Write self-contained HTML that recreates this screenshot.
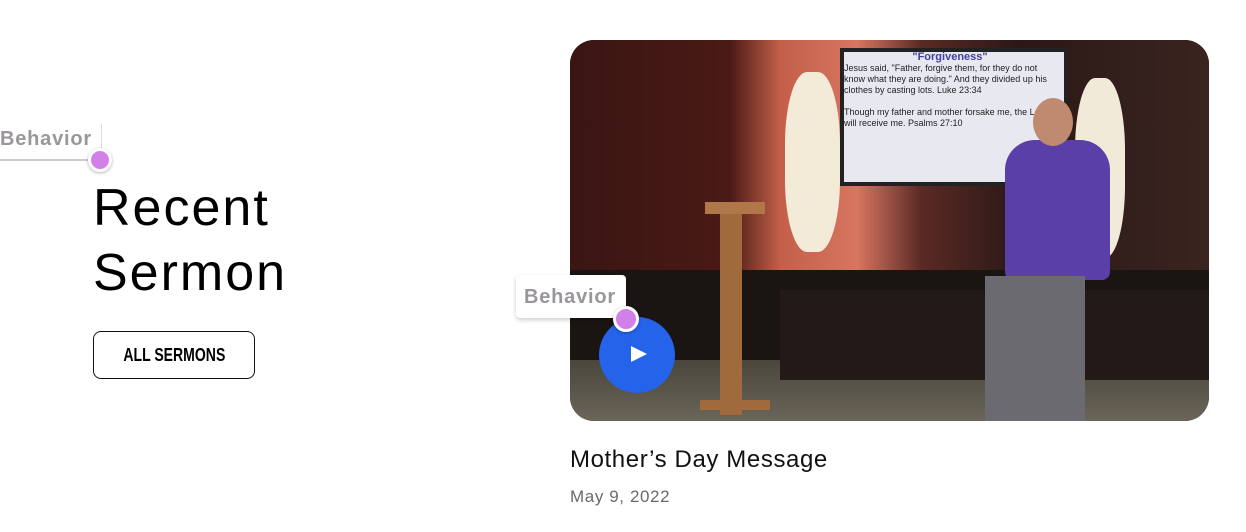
<!DOCTYPE html>
<html><head><style>
body{margin:0;width:1246px;height:532px;background:#fff;position:relative;overflow:hidden;font-family:"Liberation Sans",sans-serif}
.abs{position:absolute}
h1{position:absolute;left:93px;top:176px;margin:0;font:400 52px/65px "Liberation Sans",sans-serif;color:#000;letter-spacing:2px}
.btn{left:93px;top:331px;width:162px;height:48px;border:1px solid #111;border-radius:8px;box-sizing:border-box;text-align:center;font:700 18px/46px "Liberation Sans",sans-serif}
.btn span{display:inline-block;transform:scaleX(0.78)}
.tag{color:#9a969c;font-size:20px;font-weight:700;letter-spacing:0.8px}
.dot{width:20px;height:20px;border-radius:50%;background:#d080e8;border:3px solid #fff;box-shadow:0 1px 3px rgba(0,0,0,.3)}
</style></head><body>
<div class="abs" style="left:0;top:124px;width:101px;height:35px;border-right:1px solid #ddd;border-bottom:2px solid #ccc"></div>
<div class="abs tag" style="left:0;top:128px">Behavior</div>
<div class="abs dot" style="left:88px;top:148px;width:18px;height:18px"></div>
<h1>Recent<br>Sermon</h1>
<div class="abs btn"><span>ALL SERMONS</span></div>

<div class="abs" style="left:570px;top:40px;width:639px;height:381px;border-radius:24px;overflow:hidden;background:#241614">
 <div class="abs" style="left:0;top:0;width:639px;height:270px;background:linear-gradient(90deg,#3a1512 0%,#4a1a16 25%,#c4604a 33%,#d77560 45%,#5a2a24 55%,#2a1816 70%,#3a2420 100%)"></div>
 <div class="abs" style="left:0;top:230px;width:639px;height:100px;background:#1a1412"></div>
 <div class="abs" style="left:0;top:320px;width:639px;height:61px;background:linear-gradient(#4a463c,#6a6558)"></div>
 <div class="abs" style="left:210px;top:250px;width:429px;height:90px;background:#231a18"></div>
 <div class="abs" style="left:270px;top:8px;width:220px;height:130px;background:#e8e8f0;border:4px solid #222"></div>
 <div class="abs" style="left:274px;top:12px;width:212px;font-size:9px;line-height:11px;color:#222;text-align:left"><div style="text-align:center;color:#4040a0;font-weight:700;font-size:11px">"Forgiveness"</div>Jesus said, "Father, forgive them, for they do not know what they are doing." And they divided up his clothes by casting lots. Luke 23:34<br><br>Though my father and mother forsake me, the Lord will receive me. Psalms 27:10</div>
 <div class="abs" style="left:215px;top:32px;width:55px;height:180px;border-radius:40%;background:#f4ead8"></div>
 <div class="abs" style="left:505px;top:38px;width:50px;height:180px;border-radius:40%;background:#f2ead8"></div>
 <div class="abs" style="left:150px;top:165px;width:22px;height:210px;background:#a06a3c"></div>
 <div class="abs" style="left:135px;top:162px;width:60px;height:12px;background:#b07848"></div>
 <div class="abs" style="left:130px;top:360px;width:70px;height:10px;background:#a06a3c"></div>
 <div class="abs" style="left:435px;top:100px;width:105px;height:140px;border-radius:30px 30px 8px 8px;background:#5a3fa8"></div>
 <div class="abs" style="left:463px;top:58px;width:40px;height:48px;border-radius:50%;background:#c08a70"></div>
 <div class="abs" style="left:415px;top:236px;width:100px;height:145px;background:#6a6a70"></div>
</div>
<div class="abs" style="left:599px;top:317px;width:76px;height:76px;border-radius:50%;background:#2563eb"></div>
<svg class="abs" style="left:630px;top:345px" width="18" height="18"><path d="M1 1L17 9L1 17Z" fill="#fff"/></svg>
<div class="abs" style="left:516px;top:275px;width:110px;height:43px;background:#fff;border-radius:4px;box-shadow:0 2px 4px rgba(0,0,0,.2)"></div>
<div class="abs tag" style="left:524px;top:286px">Behavior</div>
<div class="abs dot" style="left:613px;top:306px;width:20px;height:20px"></div>

<div class="abs" style="left:570px;top:446px;font-size:24px;color:#111;letter-spacing:0.6px">Mother’s Day Message</div>
<div class="abs" style="left:570px;top:487px;font-size:17px;color:#6a6a6a;letter-spacing:0.6px">May 9, 2022</div>
</body></html>
